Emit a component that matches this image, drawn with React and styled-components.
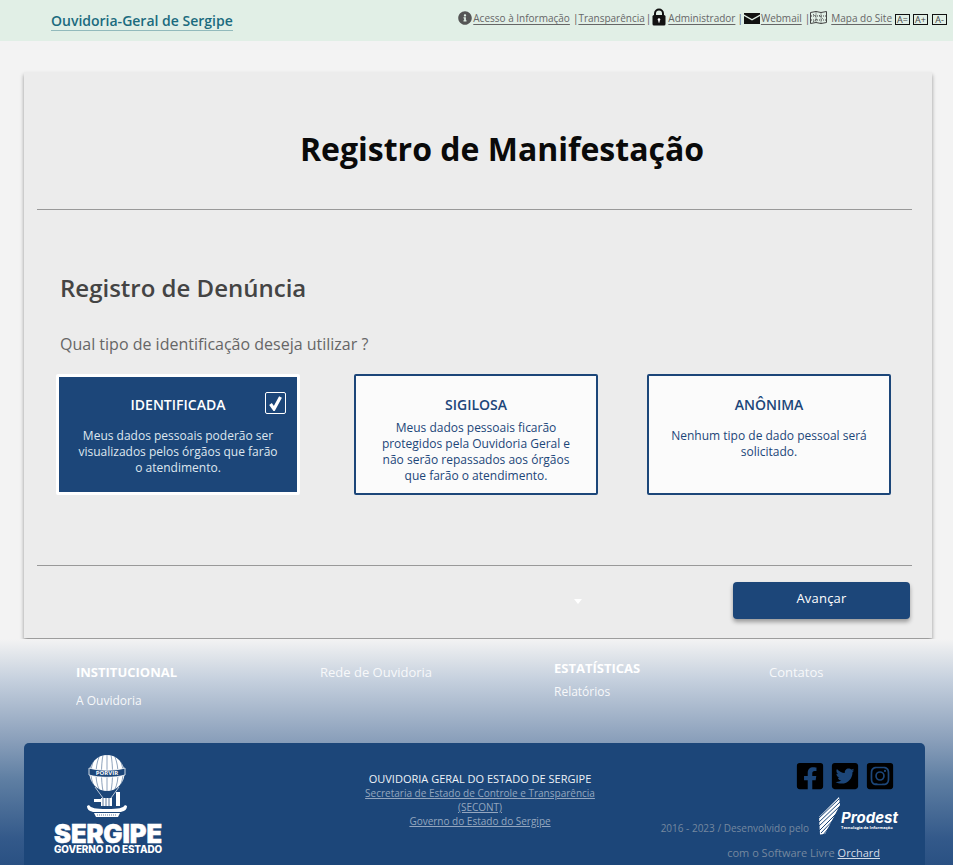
import React from "react";
import styled, { createGlobalStyle } from "styled-components";
import { FaFacebookSquare, FaTwitterSquare, FaInstagramSquare, FaInfoCircle } from "react-icons/fa";

const Global = createGlobalStyle`
  html, body { margin: 0; padding: 0; background: #f3f3f3; }
  body { font-family: "Open Sans", "Liberation Sans", sans-serif; height: 865px; overflow: hidden; }
  * { box-sizing: border-box; }
`;

const Header = styled.header`
  height: 41px; background: #e1efe6; display: flex; justify-content: space-between; padding: 0 6px 0 51px;
`;
const Brand = styled.a`
  font-size: 14px; font-weight: 600; color: #1b6b7e; margin-top: 11px; line-height: 19px;
  border-bottom: 1px solid #1b6b7e66; height: 20px;
`;
const TopNav = styled.nav`
  display: flex; align-items: center; height: 18px; margin-top: 9px; font-size: 10px; color: #555; white-space: nowrap;
`;
const NavLink = styled.a`
  color: #666; text-decoration: underline; text-underline-offset: 2px; line-height: 20px; margin-left: ${p => p.$ml || 0}px;
`;
const Sep = styled.span`color: #555; margin-left: ${p => p.$ml || 0}px;`;
const NavIcon = styled.svg`
  flex: none; margin-left: ${p => p.$ml || 0}px; margin-right: ${p => p.$mr || 0}px; margin-top: ${p => p.$mt || 0}px;
`;
const SizeBtn = styled.span`
  border: 1px solid #111; color: #444; font-size: 9px; line-height: 9px; height: 11px; padding: 0 1px; margin-left: ${p => p.$ml}px; margin-top: 2px;
  min-width: ${p => p.$w}px; text-align: center;
`;

const Card = styled.main`
  margin: 31px 21px 0 24px; height: 566px; background: #ececec; box-shadow: 0 3px 4px rgba(0,0,0,.4);
  padding: 0 20px 0 13px;
`;
const Title = styled.h1`
  margin: 0; height: 137px; padding: 55px 0 0 55px; text-align: center; font-size: 32px; line-height: 44px; font-weight: 700; color: #0a0a0a;
`;
const Rule = styled.hr`margin: 0; border: 0; height: 1px; background: #999;`;
const Body = styled.section`height: 355px; padding: 0 0 0 20px; position: relative;`;
const Sub = styled.h2`margin: 0; padding: 61px 0 0 3px; font-size: 24px; line-height: 33px; font-weight: 600; color: #444;`;
const Question = styled.p`margin: 29px 0 0 3px; font-size: 16px; line-height: 22px; color: #666;`;
const Options = styled.div`
  display: flex; margin: 19px 0 0; align-items: flex-start;
`;
const Option = styled.div`
  flex: none; width: 244px; height: 121px; margin-left: ${p => p.$ml}px;
  background: ${p => p.$active ? "#1c4679" : "#fbfbfb"}; color: ${p => p.$active ? "#dfe6ef" : "#1c4679"};
  border: ${p => p.$active ? "3px solid #fff" : "2px solid #1c4679"}; border-radius: 2px; text-align: center; position: relative;
  padding: ${p => p.$pad}; font-size: 12px; line-height: 16px;
`;
const OptTitle = styled.div`
  font-size: 14px; line-height: 19px; font-weight: 600; margin-bottom: ${p => p.$mb}px; color: ${p => p.$active ? "#fff" : "#1c4679"};
`;
const Check = styled.div`
  position: absolute; top: 15px; right: 11px; width: 21px; height: 22px; border: 1px solid #fff; border-radius: 2px;
  display: flex; align-items: center; justify-content: center;
`;
const Bottom = styled.div`
  display: flex; height: 72px; position: relative; justify-content: flex-end; padding: 16px 2px 0 0;
`;
const Arrow = styled.i`
  position: absolute; left: 537px; top: 33px; width: 0; height: 0; border: 4px solid transparent; border-top: 5px solid #fff; border-bottom: 0;
`;
const Next = styled.button`
  width: 177px; height: 37px; border: 0; border-radius: 4px; background: #1c4679; color: #fff; font: 500 13px "Open Sans", sans-serif;
  box-shadow: 0 3px 4px rgba(0,0,0,.35); padding: 0 0 6px 0; letter-spacing: .2px;
`;

const Footer = styled.footer`
  margin-top: 1px; height: 226px; background: linear-gradient(#f3f3f3 0, #c4cfdd 42px, #8ba0bb 100px, #5f7fa3 140px, #33598a 200px, #2a5183 226px);
  position: relative; padding-top: 0;
`;
const Cols = styled.div`
  display: grid; grid-template-columns: 244px 234px 215px 1fr; height: 104px; padding-left: 76px; color: #fff; font-size: 12px;
`;
const Col = styled.div`padding-top: ${p => p.$top}px;`;
const ColTitle = styled.div`font-size: 13px; line-height: 18px; font-weight: ${p => p.$plain ? 400 : 700}; opacity: ${p => p.$plain ? .85 : 1};`;
const ColLink = styled.div`font-size: 12px; line-height: 17px; margin-top: ${p => p.$mt}px; opacity: .9;`;
const Panel = styled.div`
  margin: 0 28px 0 24px; height: 122px; background: #1c4679; border-radius: 5px 5px 0 0; display: grid; grid-template-columns: 329px 293px 1fr; overflow: hidden;
`;
const LogoWrap = styled.div`
  padding: 12px 0 0 30px; display: flex; flex-direction: column; align-items: flex-start; color: #fff; font-family: "Inter", "Liberation Sans", sans-serif;
`;
const Balloon = styled.svg`margin-left: 32px; display: block;`;
const LogoBig = styled.div`font-size: 25.5px; line-height: 20px; font-weight: 900; letter-spacing: -.1px; margin-top: 5px; -webkit-text-stroke: .5px #fff;`;
const LogoSmall = styled.div`font-size: 9.9px; line-height: 10px; font-weight: 800; margin-top: 0; letter-spacing: -.1px;`;
const Center = styled.div`
  padding: 28px 0 0 0; text-align: center; width: 256px; margin-left: -1px;
`;
const CenterTitle = styled.div`font-size: 11px; line-height: 15px; color: #eef2f7; white-space: nowrap; margin: 0 -20px;`;
const CenterLink = styled.a`display: block; font-size: 10px; line-height: 14px; color: #94a6bf; text-decoration: underline; white-space: nowrap;`;
const Right = styled.div`
  position: relative; padding: 18px 30px 0 0; display: flex; flex-direction: column; align-items: flex-end; margin-left: -76px;
`;
const Social = styled.div`
  display: flex; gap: 5px; color: #000; font-size: 30px; line-height: 0; height: 30px;
`;
const CreditRow = styled.div`
  display: flex; align-items: flex-end; margin-top: 6px; height: 38px; color: #75889f; font-size: 10px; align-self: stretch; padding-left: 0; justify-content: flex-end; margin-right: -3px;
`;
const Credit = styled.span`line-height: 14px; margin-right: 10px; margin-bottom: 0;`;
const Prodest = styled.div`display: flex; align-items: center; color: #fff; margin-right: 0;`;
const ProdestText = styled.div`margin-left: 1px; padding-top: 8px;`;
const ProdestName = styled.div`font: italic 700 15px/14px "Inter", "Liberation Sans", sans-serif;`;
const ProdestTag = styled.div`font-size: 4px; line-height: 5px; font-weight: 700;`;
const Soft = styled.div`
  margin-top: 10px; font-size: 11px; line-height: 15px; color: #75889f; margin-right: 15px;
`;
const SoftLink = styled.a`color: #d4dce8; text-decoration: underline;`;

const Lock = () => (
  <NavIcon $ml={1} $mr={2} width="14" height="18" viewBox="0 0 14 18" $mt={-3}>
    <path d="M3 8V5.500a4 4 0 0 1 8 0V8" fill="none" stroke="#111" strokeWidth="2" />
    <rect x="0.5" y="7" width="13" height="10.5" rx="1.5" fill="#111" />
    <circle cx="7" cy="11.5" r="1.3" fill="#fff" />
    <rect x="6.4" y="11.5" width="1.2" height="3" fill="#fff" />
  </NavIcon>
);
const Mail = () => (
  <NavIcon $ml={1} $mr={1} width="16" height="11" viewBox="0 0 16 11">
    <path d="M0 0h16v1.5L8 6 0 1.5zM0 3l8 4.5L16 3v8H0z" fill="#111" />
  </NavIcon>
);
const MapIcon = () => (
  <NavIcon $mr={4} width="17" height="14" viewBox="0 0 17 14">
    <g fill="none" stroke="#444" strokeWidth="1">
      <path d="M.5 1.5 6 .5l5 1 5.5-1v11l-5.5 1-5-1-5.5 1z" />
      <path d="M6 .5v12M11 1.5v12" strokeDasharray="1 1" />
      <path d="M1 5h15M1 9h15M3 3l3 3M9 4l4 4M3 11l4-3" strokeDasharray="1 1" />
    </g>
  </NavIcon>
);

const BalloonLogo = () => (
  <Balloon width="42" height="64" viewBox="0 0 42 64">
    <ellipse cx="21" cy="18" rx="17.5" ry="18" fill="#fff" />
    <g stroke="#1c4679" strokeWidth=".5" fill="none">
      <path d="M21 0v36M17 0c-2 10-2 26 0 36M25 0c2 10 2 26 0 36M13 2c-4 10-4 24 0 32M29 2c4 10 4 24 0 32M8 5c-4 8-4 18 0 26M34 5c4 8 4 18 0 26" />
    </g>
    <path d="M3 13c10 3 26 3 36 0v7c-10 3-26 3-36 0z" fill="#1c4679" stroke="#fff" strokeWidth=".8" />
    <text x="21" y="19.500" textAnchor="middle" fontSize="6" fontWeight="700" fill="#fff" fontFamily="Open Sans, sans-serif">PORVIR</text>
    <path d="M9 32l8 11M33 32l-8 11" stroke="#fff" strokeWidth=".7" />
    <rect x="15" y="43" width="11" height="8" fill="#fff" />
    <path d="M17 43v8M20 43v8M23 43v8" stroke="#1c4679" strokeWidth=".7" />
    <path d="M30 37h4v14h-4z" fill="#fff" />
    <path d="M8 44h8v3H8z" fill="#fff" />
    <path d="M1 51c0 4 3 5 6 6h28c3-1 6-2 6-6l-2-1c-2 3-6 4-18 4S5 53 3 50z" fill="#fff" />
    <path d="M8 58h26l-2 4H10z" fill="#fff" />
    <path d="M11 60h20" stroke="#1c4679" strokeWidth=".7" strokeDasharray="1 1" />
  </Balloon>
);

const ProdestMark = () => (
  <svg width="21" height="38" viewBox="0 0 21 38">
    <path d="M20 0 21 8 6 37l-5 .5L0 20z" fill="#fff" />
    <g stroke="#1c4679" strokeWidth="1">
      <path d="M-1 22 20 2M-1 26 21 5M-1 30 21 9M0 34 21 13M2 36 20 17M4 38 18 21" />
    </g>
  </svg>
);

const options = [
  { t: "IDENTIFICADA", ml: -1, active: true, pad: "18px 14px 0", mb: 14, lines: ["Meus dados pessoais poderão ser", "visualizados pelos órgãos que farão", "o atendimento."] },
  { t: "SIGILOSA", ml: 54, pad: "19px 8px 0", mb: 6, lines: ["Meus dados pessoais ficarão", "protegidos pela Ouvidoria Geral e", "não serão repassados aos órgãos", "que farão o atendimento."] },
  { t: "ANÔNIMA", ml: 49, pad: "19px 8px 0", mb: 14, lines: ["Nenhum tipo de dado pessoal será", "solicitado."] },
];

export default function App() {
  return (
    <>
      <Global />
      <Header>
        <Brand>Ouvidoria-Geral de Sergipe</Brand>
        <TopNav>
          <FaInfoCircle size={14} color="#555" />
          <NavLink $ml={1}>Acesso à Informação </NavLink>
          <Sep $ml={3}>|</Sep>
          <NavLink>Transparência </NavLink>
          <Sep $ml={1}>|</Sep>
          <Lock />
          <NavLink>Administrador </NavLink>
          <Sep $ml={2}>|</Sep>
          <Mail />
          <NavLink>Webmail </NavLink>
          <Sep $ml={3}>|</Sep>
          <MapIcon />
          <NavLink>Mapa do Site </NavLink>
          <SizeBtn $ml={3} $w={15}>A=</SizeBtn>
          <SizeBtn $ml={3} $w={15}>A+</SizeBtn>
          <SizeBtn $ml={4} $w={15}>A-</SizeBtn>
        </TopNav>
      </Header>
      <Card>
        <Title>Registro de Manifestação</Title>
        <Rule />
        <Body>
          <Sub>Registro de Denúncia</Sub>
          <Question>Qual tipo de identificação deseja utilizar ?</Question>
          <Options>
            {options.map(o => (
              <Option key={o.t} $ml={o.ml} $active={o.active} $pad={o.pad}>
                <OptTitle $mb={o.mb} $active={o.active}>{o.t}</OptTitle>
                {o.lines.map(l => <div key={l}>{l}</div>)}
                {o.active && (
                  <Check>
                    <svg width="13" height="16" viewBox="0 0 13 16">
                      <path d="M1.5 9l3.5 5L11.500 2" fill="none" stroke="#fff" strokeWidth="3.200" />
                    </svg>
                  </Check>
                )}
              </Option>
            ))}
          </Options>
        </Body>
        <Rule />
        <Bottom>
          <Arrow />
          <Next>Avançar</Next>
        </Bottom>
      </Card>
      <Footer>
        <Cols>
          <Col $top={24}>
            <ColTitle>INSTITUCIONAL</ColTitle>
            <ColLink $mt={11}>A Ouvidoria</ColLink>
          </Col>
          <Col $top={24}><ColTitle $plain>Rede de Ouvidoria</ColTitle></Col>
          <Col $top={20}>
            <ColTitle>ESTATÍSTICAS</ColTitle>
            <ColLink $mt={6}>Relatórios</ColLink>
          </Col>
          <Col $top={24}><ColTitle $plain>Contatos</ColTitle></Col>
        </Cols>
        <Panel>
          <LogoWrap>
            <BalloonLogo />
            <LogoBig>SERGIPE</LogoBig>
            <LogoSmall>GOVERNO DO ESTADO</LogoSmall>
          </LogoWrap>
          <Center>
            <CenterTitle>OUVIDORIA GERAL DO ESTADO DE SERGIPE</CenterTitle>
            <CenterLink>Secretaria de Estado de Controle e Transparência </CenterLink>
            <CenterLink>(SECONT)</CenterLink>
            <CenterLink>Governo do Estado do Sergipe</CenterLink>
          </Center>
          <Right>
            <Social>
              <FaFacebookSquare />
              <FaTwitterSquare />
              <FaInstagramSquare />
            </Social>
            <CreditRow>
              <Credit>2016 - 2023 / Desenvolvido pelo</Credit>
              <Prodest>
                <ProdestMark />
                <ProdestText>
                  <ProdestName>Prodest</ProdestName>
                  <ProdestTag>Tecnologia da Informação</ProdestTag>
                </ProdestText>
              </Prodest>
            </CreditRow>
            <Soft>com o Software Livre <SoftLink>Orchard</SoftLink></Soft>
          </Right>
        </Panel>
      </Footer>
    </>
  );
}
